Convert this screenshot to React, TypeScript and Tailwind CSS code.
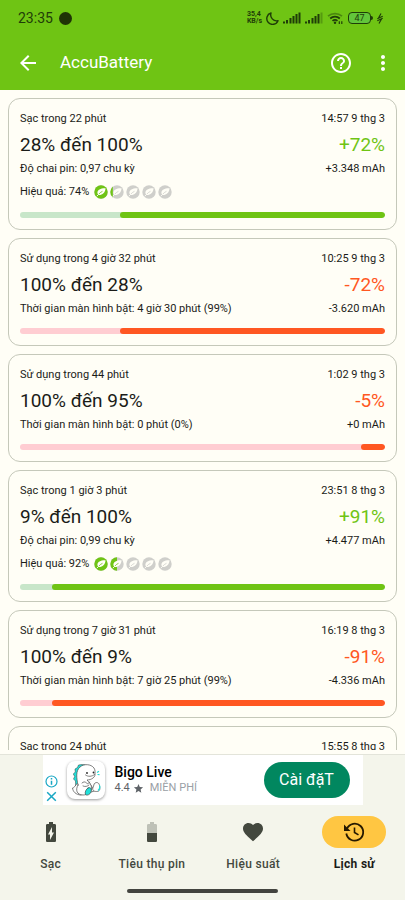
import { MdArrowBack, MdBatteryChargingFull, MdFavorite, MdHelpOutline, MdMoreVert, MdStar } from "react-icons/md";

type Session = {
  title: string;
  time: string;
  range?: string;
  change?: string;
  detail?: string;
  amount?: string;
  charge?: boolean;
  efficiency?: number;
  leaves?: number;
  start: number;
};

const sessions: Session[] = [
  {
    title: "Sạc trong 22 phút",
    time: "14:57 9 thg 3",
    range: "28% đến 100%",
    change: "+72%",
    detail: "Độ chai pin: 0,97 chu kỳ",
    amount: "+3.348 mAh",
    charge: true,
    efficiency: 74,
    leaves: 1.2,
    start: 27.5,
  },
  {
    title: "Sử dụng trong 4 giờ 32 phút",
    time: "10:25 9 thg 3",
    range: "100% đến 28%",
    change: "-72%",
    detail: "Thời gian màn hình bật: 4 giờ 30 phút (99%)",
    amount: "-3.620 mAh",
    start: 27.5,
  },
  {
    title: "Sử dụng trong 44 phút",
    time: "1:02 9 thg 3",
    range: "100% đến 95%",
    change: "-5%",
    detail: "Thời gian màn hình bật: 0 phút (0%)",
    amount: "+0 mAh",
    start: 93.5,
  },
  {
    title: "Sạc trong 1 giờ 3 phút",
    time: "23:51 8 thg 3",
    range: "9% đến 100%",
    change: "+91%",
    detail: "Độ chai pin: 0,99 chu kỳ",
    amount: "+4.477 mAh",
    charge: true,
    efficiency: 92,
    leaves: 1.5,
    start: 8.8,
  },
  {
    title: "Sử dụng trong 7 giờ 31 phút",
    time: "16:19 8 thg 3",
    range: "100% đến 9%",
    change: "-91%",
    detail: "Thời gian màn hình bật: 7 giờ 25 phút (99%)",
    amount: "-4.336 mAh",
    start: 8.8,
  },
  {
    title: "Sạc trong 24 phút",
    time: "15:55 8 thg 3",
    charge: true,
    start: 72,
  },
];

function Leaf({ fill }: { fill: number }) {
  const width = Math.max(0, Math.min(1, fill)) * 14;
  return (
    <svg viewBox="0 0 14 14" className="size-[14px]" aria-hidden="true">
      <circle cx="7" cy="7" r="6.7" fill="#cfcfcb" />
      {width > 0 && (
        <svg width={width} height="14" overflow="hidden">
          <circle cx="7" cy="7" r="6.7" fill="#6fc414" />
        </svg>
      )}
      <path d="M11.500 3.300C7.500 3 3.200 4.600 3.400 7.900c.1 1.500 1.300 2.300 2.900 2 3.500-.6 5.100-3.400 5.200-6.600z" fill="#fffef6" />
      <path d="M4.800 9.200C5.600 8 6.800 7 8.500 6.300" fill="none" stroke={fill >= 0.5 ? "#6fc414" : "#cfcfcb"} strokeWidth="0.800" />
      <path d="M2.700 11.300 4.800 9.200" stroke="#fffef6" strokeWidth="0.900" />
    </svg>
  );
}

function SessionCard({ session }: { session: Session }) {
  const accent = session.charge ? "text-[#6fc414]" : "text-[#ff5722]";
  return (
    <li className="shrink-0 rounded-xl border border-[#c5c8ba] p-[11px] text-[11px] text-[#1b1c18]">
      <div className="flex justify-between leading-[18px]">
        <span>{session.title}</span>
        <span>{session.time}</span>
      </div>
      {session.range && (
        <div className="mt-[2px] flex justify-between text-[19px] leading-[30px]">
          <span>{session.range}</span>
          <span className={accent}>{session.change}</span>
        </div>
      )}
      {session.detail && (
        <div className="mt-px flex justify-between leading-4">
          <span>{session.detail}</span>
          <span>{session.amount}</span>
        </div>
      )}
      {session.efficiency !== undefined && (
        <div className="mt-[6px] flex items-center gap-[5px] leading-[18px]">
          <span>Hiệu quả: {session.efficiency}%</span>
          <div className="flex gap-[2px]">
            {[0, 1, 2, 3, 4].map((i) => (
              <Leaf key={i} fill={(session.leaves ?? 0) - i} />
            ))}
          </div>
        </div>
      )}
      <div className={`mt-[11px] flex h-[6px] overflow-hidden rounded-full ${session.charge ? "bg-[#c8e6c9]" : "bg-[#ffcdd2]"}`}>
        <div
          className={`ml-auto rounded-full ${session.charge ? "bg-[#6fc414]" : "bg-[#ff5722]"}`}
          style={{ width: `${100 - session.start}%` }}
        />
      </div>
    </li>
  );
}

function Signal({ weak }: { weak?: boolean }) {
  return (
    <svg viewBox="0 0 18 12" className="h-3 w-[18px]" fill="#1f3d08" aria-hidden="true">
      <rect x="0" y="9.500" width="2" height="2" />
      <rect x="3" y="8" width="2" height="3.500" />
      <rect x="6.500" y="6" width="2" height="5.500" />
      <rect x="9.500" y="4" width="2" height="7.500" />
      <rect x="12.500" y="2" width="2" height="9.500" />
      <rect x="15.500" y="0.500" width="2" height="11" opacity={weak ? 0.3 : 1} />
    </svg>
  );
}

function StatusBar() {
  return (
    <div className="flex h-9 items-center justify-between pr-[22px] pl-[18px] text-[#1f3d08]">
      <div className="flex items-center gap-[6px]">
        <span className="text-[14px] leading-4">23:35</span>
        <span className="size-[13px] rounded-full bg-[#1f3306]" />
      </div>
      <div className="flex items-center gap-1">
        <div className="text-[7px] leading-[7px] font-bold">
          <div>35,4</div>
          <div>KB/s</div>
        </div>
        <svg viewBox="0 0 13 13" className="size-[13px]" fill="none" stroke="#1f3d08" strokeWidth="1.400" aria-hidden="true">
          <path d="M5 1A5.800 5.800 0 1 0 12 8.700 6 6 0 0 1 5 1z" strokeLinejoin="round" />
        </svg>
        <Signal />
        <Signal weak />
        <svg viewBox="0 0 17 13" className="h-[13px] w-[17px]" fill="none" stroke="#1f3d08" strokeWidth="1.700" aria-hidden="true">
          <path d="M1 4.200a10.500 10.500 0 0 1 14 0" opacity="0.450" />
          <path d="M3.200 6.500a7.200 7.200 0 0 1 9.600 0M5.500 8.900a4 4 0 0 1 5 0" />
          <circle cx="8" cy="10.800" r="1.200" fill="#1f3d08" stroke="none" />
          <path d="M12.300 12V9.200M14.800 9.200V12" strokeWidth="1.200" />
        </svg>
        <div className="flex items-center">
          <span className="flex h-3 w-[23px] items-center justify-center rounded-[4px] border border-[#1f3d08] bg-[#62c63b] text-[9px] leading-none">47</span>
          <span className="h-1 w-[2px] rounded-r-full bg-[#1f3d08]" />
        </div>
        <svg viewBox="0 0 6 11" className="h-[11px] w-[6px]" fill="none" stroke="#1f3d08" strokeWidth="1.200" aria-hidden="true">
          <path d="M4 .5 1.500 5M4.500 6 2 10.500M.3 5.800 5.700 3.300M.3 7.800 5.700 5.300" />
        </svg>
      </div>
    </div>
  );
}

function Dino() {
  return (
    <svg viewBox="0 0 38 38" className="size-[38px] rounded-lg bg-white shadow-[0_1px_3px_rgba(0,0,0,0.4)]" aria-hidden="true">
      <path d="M15 3.500 11.500 4l-1 2.500L8 8l.3 3-2 2 1.400 2.500L6.500 18l2 2 .2 5 3 1 1-12 2-6 4-4z" fill="#1fe0da" stroke="#333" strokeWidth=".5" />
      <g fill="#fff" stroke="#4a4a4a" strokeWidth="0.700" strokeLinejoin="round" strokeLinecap="round">
        <path d="M10 22.500c-1.500 2-3 4.500-4.500 4.500.5 4 3.500 6.500 8 7l14-4-5-8z" />
        <path d="M11 24C9.500 17 8.500 10 13 6c4-3.500 11-3 14 1 1.500 2.500 1 4.500 1 6 .5 3-3.500 6-8 6 3 3 5 6 4.500 9-.5 3.500-4.500 6-8.500 6-6 0-8-5-5-10z" />
        <path d="M15 22c1.500-1.500 3-1.500 4.500 0s2 .5 3-1M16 25c2 1 4.500.5 6-1" fill="none" />
        <path d="M21 27c2.500-1.500 4 1 3 4-1 2.500-4 4-5.500 2.500-1-2 .5-5.500 2.500-6.500z" fill="#1fe0da" />
        <path d="M27.500 22.500c2-2 4.500-1 5 2s1 6-3 6c-3.500 0-4.500-2-3.500-4z" />
        <path d="M18.500 14c2.500 2 6.500 1.700 9-.5" fill="none" />
      </g>
      <circle cx="20" cy="12" r=".9" fill="#222" />
      <circle cx="26.500" cy="11.500" r=".9" fill="#222" />
      <path d="M30 11.500l2-1.300M30.500 13.500l2 .2" stroke="#1fe0da" strokeWidth="1.200" />
      <path d="M32.500 24.500c.8 2-.2 4-1.500 5" stroke="#1fe0da" strokeWidth="1.200" fill="none" />
    </svg>
  );
}

function AdBanner() {
  return (
    <aside className="mx-auto flex h-[50px] w-full max-w-[320px] items-center bg-white pr-[13px] pl-[2px]">
      <div className="mt-4 flex w-[14px] flex-col items-center gap-[3px]">
        <button aria-label="Thông tin quảng cáo">
          <svg viewBox="0 0 13 13" className="block size-[13px]" fill="none" stroke="#18a7c4" strokeWidth="1.200">
            <circle cx="6.500" cy="6.500" r="5.500" />
            <path d="M6.500 5.700v4M6.500 3v1.400" strokeWidth="1.500" />
          </svg>
        </button>
        <button aria-label="Đóng quảng cáo">
          <svg viewBox="0 0 11 11" className="block size-[11px]" fill="none" stroke="#18a7c4" strokeWidth="1.500">
            <path d="m1.200 1.200 8.600 8.600m0-8.600L1.200 9.800" />
          </svg>
        </button>
      </div>
      <div className="ml-2">
        <Dino />
      </div>
      <div className="ml-[10px]">
        <div className="text-[14px] leading-4 font-medium text-black">Bigo Live</div>
        <div className="flex items-center text-[11px] leading-4 text-[#5f6368]">
          <span>4.4</span>
          <MdStar className="ml-[3px] size-[11px]" />
          <span className="ml-[6px] text-[#9aa0a6]">MIỄN PHÍ</span>
        </div>
      </div>
      <button className="ml-auto h-9 w-[86px] rounded-full bg-[#01875f] text-[16px] text-white">Cài đặT</button>
    </aside>
  );
}

function HalfBattery() {
  return (
    <svg viewBox="0 0 24 24" className="size-6" fill="#43483e" aria-hidden="true">
      <path d="M17 5.330C17 4.600 16.400 4 15.670 4H14V2h-4v2H8.330C7.600 4 7 4.600 7 5.330V13h10V5.330z" opacity=".3" />
      <path d="M7 13v7.670C7 21.400 7.600 22 8.330 22h7.330c.74 0 1.340-.6 1.340-1.330V13H7z" />
    </svg>
  );
}

function History() {
  return (
    <svg viewBox="0 0 24 24" className="size-6" fill="none" stroke="#261900" strokeWidth="1.800" aria-hidden="true">
      <path d="M5 8.500A8.500 8.500 0 1 1 4.300 13.500" />
      <path d="M2 4.500V11h6.500z" fill="#261900" stroke="none" />
      <path d="M12.500 7.500v5l4 2.400" strokeWidth="1.600" />
    </svg>
  );
}

const tabs = [
  { label: "Sạc", icon: <MdBatteryChargingFull className="size-6" /> },
  { label: "Tiêu thụ pin", icon: <HalfBattery /> },
  { label: "Hiệu suất", icon: <MdFavorite className="size-6" /> },
  { label: "Lịch sử", icon: <History />, active: true },
];

export default function App() {
  return (
    <div className="flex h-screen flex-col bg-[#fffef6] font-['Roboto','Noto_Sans',sans-serif]">
      <header className="shrink-0 bg-[#6fc414]">
        <StatusBar />
        <div className="flex h-[54px] items-center pr-[10px] pl-4 text-white">
          <button aria-label="Quay lại">
            <MdArrowBack className="size-6" />
          </button>
          <h1 className="ml-5 flex-1 text-[17px]">AccuBattery</h1>
          <button aria-label="Trợ giúp">
            <MdHelpOutline className="size-6" />
          </button>
          <button aria-label="Thêm" className="ml-[18px]">
            <MdMoreVert className="size-6" />
          </button>
        </div>
      </header>

      <main className="mb-1 min-h-0 flex-1 overflow-hidden">
        <ul className="flex flex-col gap-2 p-2">
          {sessions.map((session) => (
            <SessionCard key={session.title} session={session} />
          ))}
        </ul>
      </main>

      <footer className="shrink-0 border-t border-[#e3e4da] bg-[#f4f5eb]">
        <AdBanner />
        <nav className="grid grid-cols-4 pt-[11px] text-[#43483e]">
          {tabs.map((tab) => (
            <button key={tab.label} className="flex flex-col items-center gap-2">
              <span className={`flex h-8 w-16 items-center justify-center rounded-full ${tab.active ? "bg-[#ffc642]" : ""}`}>
                {tab.icon}
              </span>
              <span className={`text-[12px] leading-4 tracking-wide ${tab.active ? "font-bold text-[#1b1c18]" : "font-medium"}`}>
                {tab.label}
              </span>
            </button>
          ))}
        </nav>
        <div className="mx-auto mt-[17px] mb-[7px] h-1 w-[151px] rounded-full bg-[#43443f]" />
      </footer>
    </div>
  );
}
